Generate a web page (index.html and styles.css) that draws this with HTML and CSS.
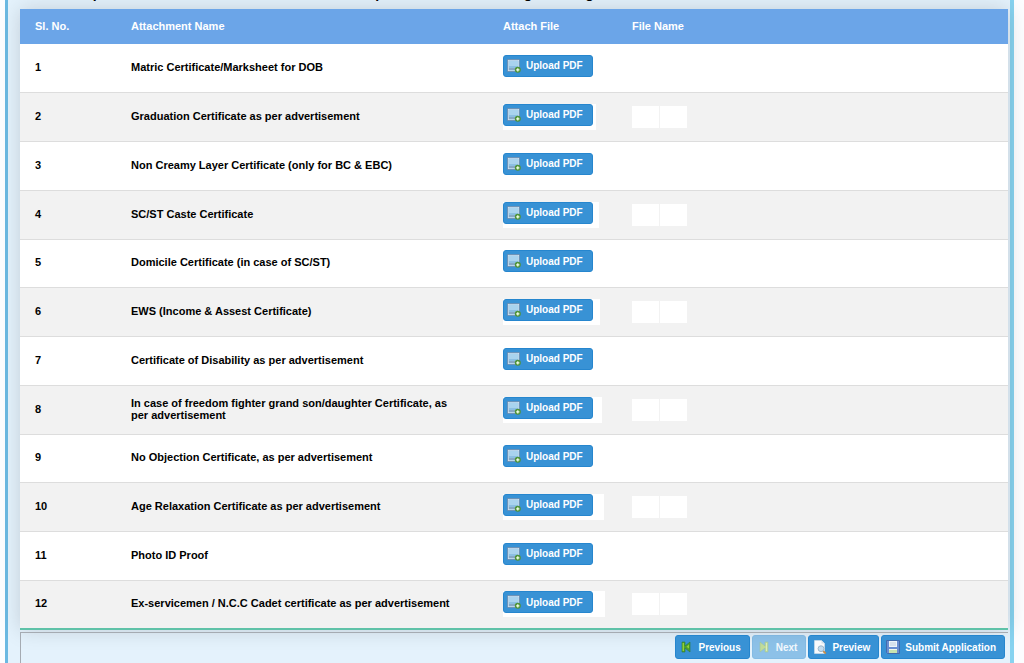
FILE: index.html
```
<!DOCTYPE html>
<html lang="en">
<head>
  <meta charset="UTF-8">
  <meta name="viewport" content="width=device-width, initial-scale=1.0">
  <title>Upload Attachments</title>
  <link rel="stylesheet" href="styles.css">
</head>
<body>
  <svg class="sprites" aria-hidden="true">
    <symbol id="icon-upload" viewBox="0 0 14 14">
      <rect x="1" y="1" width="11" height="11" fill="#8cbfe2" stroke="#e4eaf2"/>
      <path d="M0.5 0.5h12v12h-12z" fill="none" stroke="#56759b" stroke-width="0.6"/>
      <path d="M2 2h9v5h-9z" fill="#a9d3ee"/>
      <path d="M2 9h9v2h-9z" fill="#86a8c5"/>
      <circle cx="10.8" cy="10.8" r="3" fill="#4f9338"/>
      <path d="M10.8 9.2v3.2M9.2 10.8h3.2" stroke="#f4ffe9" stroke-width="1.2"/>
    </symbol>
    <symbol id="icon-previous" viewBox="0 0 14 14">
      <path d="M2 2h3v4l5-4v10l-5-4v4h-3z" fill="#4da02c" stroke="#2d7836" stroke-width="0.6"/>
      <path d="M2.6 3h1.4v8h-1.4zM9 4.5v4l-2.5-1.7z" fill="#93cf3b"/>
    </symbol>
    <symbol id="icon-next" viewBox="0 0 14 14">
      <path d="M11 2h-3v4l-5-4v10l5-4v4h3z" fill="#9fc83d" stroke="#5b9b48" stroke-width="0.6"/>
      <path d="M9 3h1v8h-1z" fill="#d5e879"/>
    </symbol>
    <symbol id="icon-preview" viewBox="0 0 14 14">
      <path d="M1.5 0.5h7l3 3v10h-10z" fill="#f8fafc" stroke="#d7e1ea" stroke-width="0.6"/>
      <path d="M8.5 0.5v3h3" fill="#d2dfea"/>
      <path d="M10 11l2.8 2.5" stroke="#c58d4c" stroke-width="1.8"/>
      <circle cx="8" cy="8.7" r="2.9" fill="#c3dcef" stroke="#9db7ca"/>
    </symbol>
    <symbol id="icon-save" viewBox="0 0 14 14">
      <path d="M0.5 0.5h13v13h-12l-1-1z" fill="#6a8ed2" stroke="#426bad"/>
      <path d="M3 1h8v6h-8z" fill="#eef3fa"/>
      <path d="M4 3h6M4 5h6" stroke="#b4c3d9" stroke-width="0.8"/>
      <path d="M3 9h8v4h-8z" fill="#c9e4b0"/>
      <path d="M3 9h8v1h-8z" fill="#f1f6ee"/>
    </symbol>
  </svg>

  <main class="page">
    <!-- placeholder wording, the line is scrolled past the top edge -->
    <p class="note">Please upload all of the scanned certificates in the pdf format before using the image</p>

    <table class="attachments">
      <thead>
        <tr>
          <th class="col-no">Sl. No.</th>
          <th class="col-name">Attachment Name</th>
          <th class="col-attach">Attach File</th>
          <th>File Name</th>
        </tr>
      </thead>
      <tbody id="attachmentRows"></tbody>
    </table>

    <div class="actions">
      <button type="button" class="btn"><svg class="icon"><use href="#icon-previous"/></svg>Previous</button>
      <button type="button" class="btn" disabled><svg class="icon"><use href="#icon-next"/></svg>Next</button>
      <button type="button" class="btn"><svg class="icon"><use href="#icon-preview"/></svg>Preview</button>
      <button type="button" class="btn"><svg class="icon"><use href="#icon-save"/></svg>Submit Application</button>
    </div>
  </main>

  <script src="script.js"></script>
</body>
</html>
```
FILE: styles.css
```
* {
  box-sizing: border-box;
}

body {
  margin: 0;
  padding: 0 10px 0 5px;
  background-color: #fcfdff;
  font-family: "Liberation Sans", Arial, sans-serif;
  font-size: 11px;
  font-weight: bold;
  color: #000;
  overflow: hidden;
}

.sprites {
  display: none;
}

.page {
  min-height: 100vh;
  padding: 0 2px 0 12px;
  border-left: 3px solid #6bb9e2;
  border-right: 4px solid #87d3f0;
  background-color: #e4f2fc;
}

.note {
  height: 9px;
  margin: 0;
  padding: 0 0 8px 16px;
  display: flex;
  align-items: flex-end;
  font-size: 14px;
  line-height: 16px;
  white-space: nowrap;
}

.attachments {
  width: 100%;
  border-collapse: collapse;
  table-layout: fixed;
  border-bottom: 2px solid #5fc2a8;
  box-shadow: 0 0 20px rgba(0, 0, 0, 0.15);
}

.attachments th,
.attachments td {
  padding: 0 24px 0 15px;
  text-align: left;
}

.attachments th,
.attachments td:nth-child(-n + 2) {
  padding-bottom: 2px;
}

.attachments thead tr {
  height: 35px;
  background-color: #6ba5e8;
  color: #fff;
}

.attachments tbody tr {
  height: 49px;
  background-color: #fff;
  border-bottom: 1px solid #ddd;
}

.attachments tbody tr:nth-child(4n + 1) {
  height: 48px;
}

.attachments tbody tr:nth-child(even) {
  background-color: #f2f2f2;
}

.attachments tbody tr:last-child {
  border-bottom: none;
}

.attachments .col-no {
  width: 96px;
}

.attachments .col-name {
  width: 372px;
}

.attachments .col-attach {
  width: 129px;
}

.upload {
  display: flex;
  align-items: flex-start;
  height: 26px;
  background-color: #fff;
}

.files {
  display: flex;
  gap: 1px;
}

.files span {
  width: 27px;
  height: 22px;
  background-color: #fff;
}

.btn {
  display: inline-flex;
  align-items: center;
  gap: 5px;
  height: 22px;
  min-width: 90px;
  padding: 0 8px 0 3px;
  border: 1px solid #2686ce;
  border-radius: 3px;
  background-color: #3892d5;
  color: #fff;
  font-family: inherit;
  font-size: 10px;
  font-weight: bold;
  white-space: nowrap;
  cursor: pointer;
}

.btn:disabled {
  opacity: 0.5;
  cursor: default;
}

.icon {
  width: 14px;
  height: 14px;
  flex: none;
}

.actions {
  display: flex;
  justify-content: flex-end;
  gap: 2px;
  margin-top: 2px;
  padding: 2px 3px 20px;
  border: 1px solid #a5abb2;
  border-right: none;
}

.actions .btn {
  height: 24px;
  min-width: 0;
  padding: 0 8px 0 4px;
}
```
FILE: script.js
```
const attachments = [
  { name: 'Matric Certificate/Marksheet for DOB', width: 93 },
  { name: 'Graduation Certificate as per advertisement', width: 93 },
  { name: 'Non Creamy Layer Certificate (only for BC & EBC)', width: 95 },
  { name: 'SC/ST Caste Certificate', width: 96 },
  { name: 'Domicile Certificate (in case of SC/ST)', width: 96 },
  { name: 'EWS (Income & Assest Certificate)', width: 97 },
  { name: 'Certificate of Disability as per advertisement', width: 98 },
  { name: 'In case of freedom fighter grand son/daughter Certificate, as per advertisement', width: 99 },
  { name: 'No Objection Certificate, as per advertisement', width: 100 },
  { name: 'Age Relaxation Certificate as per advertisement', width: 101 },
  { name: 'Photo ID Proof', width: 101 },
  { name: 'Ex-servicemen / N.C.C Cadet certificate as per advertisement', width: 102 }
];

const rows = document.getElementById('attachmentRows');

attachments.forEach((item, index) => {
  const row = document.createElement('tr');
  row.innerHTML = `
    <td>${index + 1}</td>
    <td>${item.name.replace('&', '&amp;')}</td>
    <td><div class="upload" style="width: ${item.width}px">
      <button type="button" class="btn"><svg class="icon"><use href="#icon-upload"/></svg>Upload PDF</button>
    </div></td>
    <td><div class="files"><span></span><span></span></div></td>`;
  rows.appendChild(row);
});
```
